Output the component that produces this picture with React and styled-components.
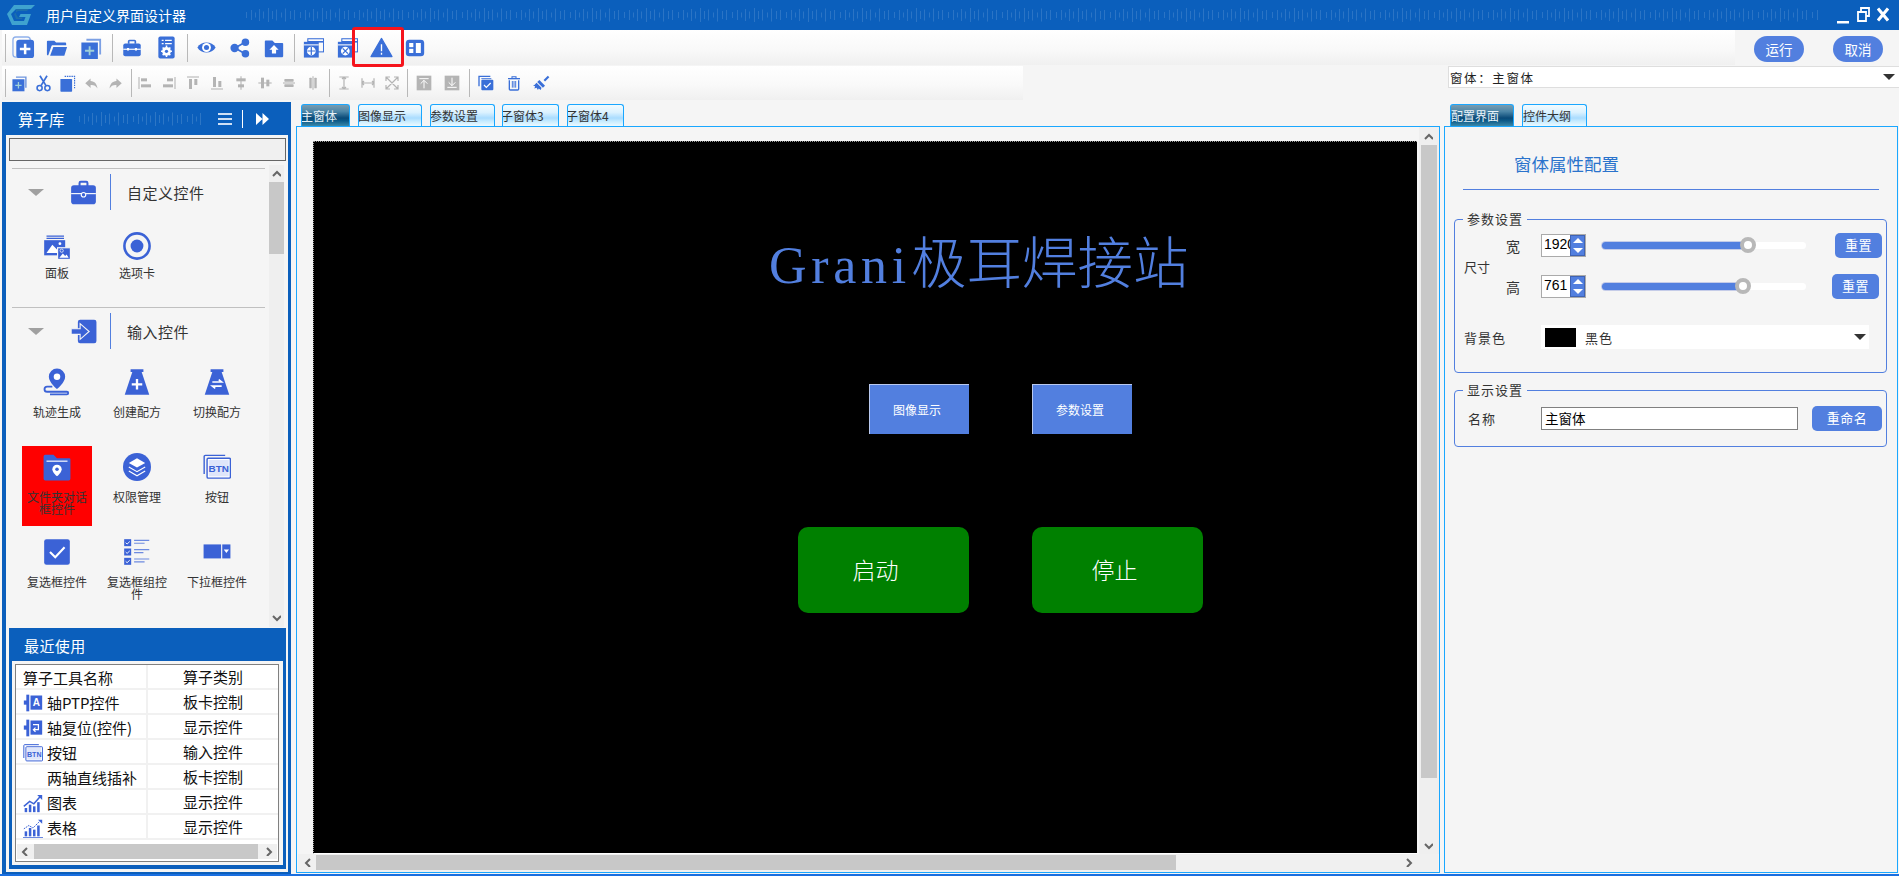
import React from 'react';
import styled, { createGlobalStyle } from 'styled-components';

const FONT = `"Noto Sans CJK SC", "Liberation Sans", sans-serif`;
const BLUE = '#0b5fbc';
const CYAN = '#1aa7ff';
const ACCENT = '#527fdf';
const T = '#3a6fd8';
const L = '#3b62d6';
const G = '#b4b4b4';

const Global = createGlobalStyle`
  html, body { margin: 0; padding: 0; background: #fff; overflow: hidden; }
  * { box-sizing: border-box; }
  body { font-family: ${FONT}; font-size: 12px; color: #333; }
`;

const Win = styled.div`
  width: 1899px; height: 876px; display: flex; flex-direction: column;
  background: #f5f5f5; border-bottom: 2px solid #1a6fe0; overflow: hidden;
`;
const TitleBar = styled.div`
  height: 30px; flex: none; background: ${BLUE}; display: flex; align-items: center; color: #fff;
`;
const LogoBox = styled.div` width: 28px; height: 20px; margin-left: 7px; flex: none; `;
const TitleText = styled.div` margin-left: 11px; width: 199px; font-size: 14px; line-height: 30px; flex: none; `;
const WaveSvg = styled.svg` display: block; flex: none; `;
const Controls = styled.div` display: flex; margin-left: 19px; `;
const CtrlSvg = styled.svg` display: block; margin-left: ${p => p.$m || 0}px; `;

const Row = styled.div` height: 35px; flex: none; display: flex; justify-content: space-between; `;
const Toolbar = styled.div`
  width: ${p => p.$w}px; height: ${p => p.$h || 35}px; margin-top: ${p => p.$top || 0}px; margin-left: 2px;
  display: flex; align-items: center; flex: none;
  background: linear-gradient(#fff, #f9f9f9 55%, #f0f0f0);
`;
const Sep = styled.div`
  width: 1px; height: 28px; background: #b8b8b8; flex: none;
  margin-left: ${p => p.$l || 0}px; margin-right: ${p => p.$r || 0}px;
`;
const Slot = styled.div`
  width: ${p => p.$w}px; height: 100%; flex: none; display: flex; align-items: center; justify-content: center; position: relative;
  &::after {
    content: ${p => (p.$flag ? '""' : 'none')};
    position: absolute; left: -12px; right: -6px; top: -3px; bottom: -2px;
    border: 3px solid #f5141c; border-radius: 3px;
  }
`;
const Svg = styled.svg` display: block; flex: none; `;
const TopButtons = styled.div` display: flex; gap: 29px; margin: 6px 16px 0 19px; flex: 1; `;
const PillButton = styled.div`
  width: 50px; height: 26px; border-radius: 13px; background: ${ACCENT}; color: #fff;
  font-size: 13.5px; line-height: 26px; text-align: center;
`;
const FormCombo = styled.div`
  width: 451px; height: 22px; margin-top: 1px; background: #fff; border: 1px solid #dedede; border-right: 0;
  display: flex; align-items: center; justify-content: space-between; padding: 0 4px 0 1px;
  font-size: 12.5px; letter-spacing: 1.6px; color: #222;
`;
const ArrowDown = styled.div`
  width: 0; height: 0; border-left: 6px solid transparent; border-right: 6px solid transparent; border-top: 6px solid #333; flex: none;
`;

const Body = styled.div` flex: 1; display: flex; min-height: 0; `;
const LeftPanel = styled.div`
  width: 289px; margin: 2px 0 0 2px; flex: none; display: flex; flex-direction: column;
  border: solid ${BLUE}; border-width: 0 3px 2px 4px; background: #f5f5f5;
`;
const PanelHead = styled.div`
  height: 33px; flex: none; background: ${BLUE}; margin: 0 -3px 0 -4px; display: flex; align-items: center; color: #fff;
`;
const PanelTitle = styled.div` font-size: 15.5px; margin-left: 16px; width: 60px; `;
const HeadRule = styled.div` width: 1px; height: 18px; background: #fff; margin: 0 13px 0 10px; `;
const PanelInner = styled.div` flex: 1; display: flex; flex-direction: column; padding: 3px 2px 3px 3px; min-height: 0; `;
const Search = styled.div` height: 23px; flex: none; border: 1px solid #666; background: #f0f0f0; `;
const ListWrap = styled.div` height: 462px; margin: 4px 0 1px; display: flex; flex: none; `;
const GroupList = styled.div` width: 256px; margin-left: 3px; padding-top: 3px; overflow: hidden; flex: none; `;
const GroupHead = styled.div`
  width: 253px; height: 49px; border-top: 1px solid #c0c0c0; display: flex; align-items: center; padding: 0 0 2px 16px;
`;
const Tri = styled.div`
  width: 0; height: 0; border-left: 8px solid transparent; border-right: 8px solid transparent; border-top: 7px solid #a0a0a0; margin-right: 26px; flex: none;
`;
const VRule = styled.div` width: 1px; height: 36px; background: ${ACCENT}; margin: 0 16px 0 13px; flex: none; `;
const GroupName = styled.div` font-size: 15px; letter-spacing: 0.5px; color: #333; `;
const ItemGrid = styled.div`
  display: grid; grid-template-columns: repeat(3, 70px); grid-auto-rows: 80px; gap: 5px 10px; margin: 5px 0 5px 10px;
`;
const Cell = styled.div`
  background: ${p => (p.$hot ? '#ff0000' : 'transparent')};
  display: flex; flex-direction: column; align-items: center;
`;
const CellIcon = styled.div` height: 45px; padding-top: ${p => (p.$drop ? 10 : 7)}px; flex: none; `;
const CellLabel = styled.div` font-size: 12px; line-height: 12px; text-align: center; color: #333; width: 60px; `;
const VBar = styled.div`
  width: ${p => p.$w || 15}px; margin-left: 1px; flex: none; background: #efefef; display: flex; flex-direction: column; align-items: center; position: relative;
`;
const VThumb = styled.div`
  position: absolute; left: ${p => p.$x || 0}px; right: ${p => p.$x || 0}px; top: ${p => p.$t}px; height: ${p => p.$h}px; background: #c8c8c8;
`;
const Chevron = styled.svg` position: absolute; display: block; ${p => p.$pos} `;

const Recent = styled.div`
  height: 241px; flex: none; margin-right: 0; border: solid ${BLUE}; border-width: 0 3px 4px; background: #f5f5f5; display: flex; flex-direction: column;
`;
const RecentHead = styled.div`
  height: 33px; flex: none; background: ${BLUE}; margin: 0 -3px; padding-left: 15px; font-size: 15px; line-height: 36px; color: #fff; letter-spacing: .4px;
`;
const TableBox = styled.div`
  height: 198px; margin: 3px 4px 0 3px; border: 1px solid #808080; background: #fff; display: flex; flex-direction: column; flex: none; padding-bottom: 2px;
`;
const Rows = styled.div` flex: 1; overflow: hidden; `;
const TRow = styled.div`
  height: 25px; display: grid; grid-template-columns: 132px 1fr; border-bottom: 2px solid #f1f1f1; font-size: 15px; line-height: 23px; color: #111;
`;
const TName = styled.div`
  border-right: 2px solid #f1f1f1; padding-left: 7px; display: flex; align-items: center; height: 25px; white-space: nowrap; overflow: hidden;
`;
const TIcon = styled.div` width: 24px; flex: none; `;
const TKind = styled.div` padding-left: 35px; `;
const HBar = styled.div` height: ${p => p.$h || 15}px; margin: 0 1px; background: #f0f0f0; flex: none; position: relative; `;
const HThumb = styled.div`
  position: absolute; left: ${p => p.$l}px; width: ${p => p.$w}px; top: ${p => p.$t || 0}px; height: 15px; background: #c8c8c8;
`;

const Center = styled.div` width: 1144px; margin-left: 5px; flex: none; display: flex; flex-direction: column; margin-bottom: 1px; `;
const TabStrip = styled.div` height: 26px; flex: none; padding-top: 4px; display: flex; align-items: stretch; `;
const Tab = styled.div`
  width: ${p => p.$w}px; margin-left: ${p => p.$m}px; flex: none; overflow: hidden; white-space: nowrap;
  border: 1px solid ${CYAN}; border-bottom: 0; border-radius: 3px 3px 0 0;
  font-size: 12px; line-height: 22px; text-indent: ${p => p.$indent || 0}px;
  color: ${p => (p.$on ? '#e8f2f8' : '#333')};
  background: ${p => (p.$on
    ? 'linear-gradient(#7a9db1, #4d87a8 30%, #0a4a78 62%, #0c5a88 75%, #3b88a8)'
    : 'linear-gradient(#f2fbff, #dcf2ff 35%, #a9dcff 62%, #c8ecff 78%, #edfaff)')};
`;
const Frame = styled.div` flex: 1; border: 1px solid ${CYAN}; display: flex; flex-direction: column; min-height: 0; background: #f5f5f5; `;
const FrameMain = styled.div` flex: 1; display: flex; min-height: 0; `;
const Viewport = styled.div` flex: 1; padding: 14px 1px 0 16px; display: flex; `;
const Canvas = styled.div`
  flex: 1; background: #000; position: relative; border-top: 1px dotted #999; border-left: 1px dotted #999; border-bottom: 1px solid #fff;
`;
const Headline = styled.div`
  position: absolute; left: 455px; top: 87px; height: 60px; line-height: 60px; font-size: 55.5px; color: ${ACCENT}; white-space: nowrap; font-weight: 300;
`;
const Latin = styled.span` font-family: "Liberation Serif", serif; font-size: 52px; letter-spacing: 4.7px; `;
const FlatButton = styled.div`
  position: absolute; left: ${p => p.$x}px; top: ${p => p.$y}px; width: 100px; height: 50px; background: ${ACCENT};
  border-top: 1px solid #b9c9ef; border-left: 1px solid #b9c9ef; color: #fff; font-size: 12px; line-height: 49px; text-align: center; padding-right: 5px;
`;
const GreenButton = styled.div`
  position: absolute; left: ${p => p.$x}px; top: ${p => p.$y}px; width: 171px; height: 86px; background: #008000; border-radius: 10px;
  color: #fff; font-size: 23px; line-height: 84px; text-align: center; padding-right: ${p => p.$pad}px; font-weight: 300;
`;

const Right = styled.div` width: 454px; margin-left: 4px; flex: none; display: flex; flex-direction: column; margin-bottom: 1px; `;
const RightHeadBlock = styled.div`
  margin: 0 18px; height: 63px; border-bottom: 1px solid ${ACCENT}; padding: 25px 0 0 51px; font-size: 17.5px; line-height: 24px; color: #2a73cc; flex: none;
`;
const Group = styled.div`
  position: relative; margin: ${p => p.$top}px 0 0 9px; width: 433px; height: ${p => p.$h}px; border: 1px solid ${ACCENT}; border-radius: 4px; padding: ${p => p.$pad}px 0 0 9px; flex: none;
`;
const Legend = styled.div`
  position: absolute; left: 8px; top: -10px; padding: 0 4px; background: #f5f5f5; font-size: 13px; line-height: 18px; letter-spacing: 1px; color: #333;
`;
const SizeBlock = styled.div` display: flex; align-items: center; height: 64px; `;
const FieldName = styled.div` width: ${p => p.$w}px; flex: none; font-size: 13px; letter-spacing: ${p => p.$ls || 0}px; color: #333; `;
const SizeRows = styled.div` display: flex; flex-direction: column; gap: 18px; margin-left: 16px; `;
const SizeRow = styled.div` display: flex; align-items: center; height: 23px; `;
const Axis = styled.div` width: 35px; flex: none; font-size: 14px; color: #333; `;
const Spin = styled.div`
  width: 45px; height: 23px; flex: none; display: flex; border: 1px solid #aaa; background: #fff; overflow: hidden;
`;
const SpinValue = styled.div`
  width: 28px; overflow: hidden; font-family: "Liberation Sans", sans-serif; font-size: 14px; line-height: 19px; padding-left: 2px; color: #000; flex: none; white-space: nowrap;
`;
const SpinButtons = styled.div`
  flex: 1; background: ${ACCENT}; display: flex; flex-direction: column; border: 1px solid #3f63b4; gap: 2px; background-clip: padding-box;
`;
const SpinHalf = styled.div` flex: 1; display: flex; align-items: center; justify-content: center; background: ${ACCENT}; `;
const MiniTri = styled.div`
  width: 0; height: 0; border-left: 5px solid transparent; border-right: 5px solid transparent;
  ${p => (p.$up ? 'border-bottom: 5px solid #fff;' : 'border-top: 5px solid #fff;')}
`;
const Track = styled.div`
  width: 204px; height: 7px; margin-left: 16px; flex: none; background: #fff; border-radius: 4px; position: relative;
`;
const TrackFill = styled.div`
  height: 100%; width: ${p => p.$pct}px; background: ${ACCENT}; border-radius: 4px 0 0 4px; box-shadow: 0 0 0 1px #c5cce8;
`;
const TrackThumb = styled.div`
  position: absolute; left: ${p => p.$pct - 8}px; top: -5px; width: 16px; height: 16px; border-radius: 50%; background: #fff; border: 4px solid #b8b8b8;
`;
const SmallButton = styled.div`
  width: ${p => p.$w || 47}px; height: 25px; margin-left: ${p => p.$m}px; flex: none; background: ${ACCENT}; border-radius: 5px; color: #fff;
  font-size: 13px; line-height: 24px; text-align: center; letter-spacing: .5px;
`;
const ColorRow = styled.div` display: flex; align-items: center; margin-top: 27px; `;
const ColorCombo = styled.div`
  width: 328px; height: 24px; background: #fff; flex: none; display: flex; align-items: center; padding: 0 3px 0 4px;
`;
const Swatch = styled.div` width: 31px; height: 19px; background: #000; flex: none; `;
const ColorName = styled.div` flex: 1; margin-left: 9px; font-size: 13px; letter-spacing: 1px; color: #333; `;
const NameRow = styled.div` display: flex; align-items: center; padding-left: 4px; `;
const NameInput = styled.div`
  width: 257px; height: 23px; margin-left: 0; flex: none; background: #fff; border: 1px solid #808080; font-size: 13.5px; line-height: 21px; padding-left: 3px; color: #000;
`;

/* ---------- drawings ---------- */
const I = ({ s = 24, w, h, children }) => (
  <Svg width={w || s} height={h || s} viewBox="0 0 24 24">{children}</Svg>
);

const icons = {
  newDoc: <><rect x="1" y="1" width="18" height="21" rx="3" fill="none" stroke="#8fb0ea" strokeWidth="1.4" /><rect x="4.5" y="4" width="18.5" height="19" rx="3" fill={T} /><path d="M13.7 8v11M8.2 13.5h11" stroke="#fff" strokeWidth="2.6" /></>,
  folder: <><path d="M1 5a1 1 0 0 1 1-1h7l2 2h10a1 1 0 0 1 1 1v2H7a1 1 0 0 0-1 .7L2.5 20H2a1 1 0 0 1-1-1z" fill={T} /><path d="M8 11h15l-3 9.5H4.5z" fill={T} /></>,
  addWin: <><path d="M7 2h16v17h-2V4H7z" fill="#7ca0e4" /><rect x="1.5" y="6" width="18" height="18" fill={T} /><path d="M10.5 10v10M5.5 15h10" stroke="#9fd0d8" strokeWidth="2" /></>,
  case: <><path d="M8 7V4a1 1 0 0 1 1-1h6a1 1 0 0 1 1 1v3" fill="none" stroke={T} strokeWidth="2" /><rect x="1.5" y="6.5" width="21" height="15.5" rx="2.5" fill={T} /><path d="M1.5 13.5h21" stroke="#fff" strokeWidth="1.4" /><rect x="6" y="12" width="2.5" height="3" fill="#fff" /><rect x="15.5" y="12" width="2.5" height="3" fill="#fff" /></>,
  docGear: <><rect x="3.5" y="0.5" width="17" height="23" rx="2" fill={T} /><path d="M7 4.5h2M10.5 4.5h7M7 8h2M10.5 8h7" stroke="#fff" strokeWidth="1.2" /><circle cx="12" cy="16" r="4.6" fill="#fff" /><circle cx="12" cy="16" r="1.7" fill={T} /><path d="M12 10v2M12 20v2M6.3 16h2M15.7 16h2M8 12l1.3 1.3M16 20l-1.3-1.3M16 12l-1.3 1.3M8 20l1.3-1.3" stroke="#fff" strokeWidth="1.6" /></>,
  eye: <><path d="M.5 12C5 3.5 19 3.5 23.500 12 19 20.500 5 20.500.5 12z" fill={T} /><circle cx="12" cy="12" r="5.600" fill="#fff" /><circle cx="12" cy="12" r="3.200" fill={T} /></>,
  share: <><path d="M6 12L18 5M6 12l12 7" stroke={T} strokeWidth="2" /><circle cx="5.5" cy="12" r="5" fill={T} /><circle cx="18.5" cy="5" r="4.5" fill={T} /><circle cx="18.5" cy="19" r="4.5" fill={T} /></>,
  folderUp: <><path d="M2 3h8l3 3h9a1 1 0 0 1 1 1v15a1 1 0 0 1-1 1H2a1 1 0 0 1-1-1V4a1 1 0 0 1 1-1z" fill={T} /><path d="M12 8.5l5.5 5.5H14.5v4.5h-5V14H6.5z" fill="#fff" /></>,
  winPlus: <><rect x="5.5" y="2" width="18" height="15" fill="none" stroke={T} strokeWidth="1.2" /><path d="M5.5 5.5h18" stroke={T} strokeWidth="1.8" /><rect x="1" y="5.5" width="17" height="18" fill={T} /><path d="M1 9h17" stroke="#fff" strokeWidth="1.2" /><circle cx="9.5" cy="16" r="5" fill="#fff" /><path d="M9.5 11.5v9M5 16h9" stroke={T} strokeWidth="1.4" /></>,
  winX: <><rect x="5.5" y="2" width="18" height="15" fill="none" stroke={T} strokeWidth="1.2" /><path d="M5.5 5.5h18" stroke={T} strokeWidth="1.8" /><rect x="1" y="5.5" width="17" height="18" fill={T} /><path d="M1 9h17" stroke="#fff" strokeWidth="1.2" /><circle cx="9.5" cy="16" r="5" fill="#fff" /><path d="M6.5 13l6 6M12.5 13l-6 6" stroke={T} strokeWidth="1.6" /></>,
  warn: <><path d="M12 2.5L23 21.5H1z" fill={T} stroke={T} strokeWidth="1.2" strokeLinejoin="round" /><path d="M12 8.5v7.5M12 17.6v2" stroke="#fff" strokeWidth="1.4" /></>,
  layout: <><rect x="1" y="2" width="22" height="20" rx="4" fill={T} /><rect x="5" y="6" width="5" height="5" fill="#fff" /><rect x="5" y="13" width="5" height="5" fill="#fff" /><rect x="13" y="6" width="6" height="12" fill="#fff" /></>,

  copy: <><path d="M7 2h15v16h-2V4H7z" fill="#6f95de" /><rect x="2" y="6" width="17" height="17" fill={T} /><path d="M10.5 10v9M6 14.5h9" stroke="#9fd0d8" strokeWidth="1.8" /></>,
  cut: <><path d="M7 1l8.5 14M17 1L8.5 15" stroke={T} strokeWidth="2.4" /><circle cx="6.5" cy="18.5" r="3.6" fill="none" stroke={T} strokeWidth="2.2" /><circle cx="17.5" cy="18.5" r="3.6" fill="none" stroke={T} strokeWidth="2.2" /></>,
  paste: <><path d="M8 2h14v17" fill="none" stroke={T} strokeWidth="1.6" strokeDasharray="2 1.2" /><rect x="2" y="5.5" width="16.5" height="18" rx="1" fill={T} /></>,
  undo: <path d="M10.5 4L2 11.5l8.5 7.5v-4.5c5.5-.3 8.5 1.5 11 5.5-.7-7.5-4.5-11.5-11-12z" fill={G} />,
  redo: <path d="M13.5 4L22 11.5l-8.5 7.5v-4.5C8 14.2 5 16 2.500 20c.7-7.500 4.500-11.500 11-12z" fill={G} />,
  aL: <><path d="M3 3v18" stroke={G} strokeWidth="1.6" /><rect x="6" y="5" width="9" height="4.500" fill={G} /><rect x="6" y="14" width="15" height="4.500" fill={G} /></>,
  aR: <><path d="M21 3v18" stroke={G} strokeWidth="1.6" /><rect x="9" y="5" width="9" height="4.500" fill={G} /><rect x="3" y="14" width="15" height="4.500" fill={G} /></>,
  aT: <><path d="M3 3h18" stroke={G} strokeWidth="1.6" /><rect x="6" y="6" width="4.500" height="15" fill={G} /><rect x="14" y="6" width="4.500" height="9" fill={G} /></>,
  aB: <><path d="M3 21h18" stroke={G} strokeWidth="1.6" /><rect x="6" y="3" width="4.500" height="15" fill={G} /><rect x="14" y="9" width="4.500" height="9" fill={G} /></>,
  aH: <><path d="M12 2v20" stroke={G} strokeWidth="1.6" /><rect x="5" y="5" width="14" height="4.500" fill={G} /><rect x="7.500" y="14" width="9" height="4.500" fill={G} /></>,
  aV: <><path d="M2 12h20" stroke={G} strokeWidth="1.6" /><rect x="6" y="4" width="4.500" height="16" fill={G} /><rect x="14" y="7" width="4.500" height="10" fill={G} /></>,
  dH: <><path d="M3 12h18" stroke={G} strokeWidth="1.6" /><rect x="5" y="6" width="14" height="4" rx="1" fill={G} /><rect x="5" y="14" width="14" height="4" rx="1" fill={G} /></>,
  dV: <><path d="M12 2v20" stroke={G} strokeWidth="1.6" /><rect x="6.500" y="4" width="3.600" height="16" rx="1" fill={G} /><rect x="14" y="4" width="3.600" height="16" rx="1" fill={G} /></>,
  sH: <path d="M5 3h14M5 21h14M12 3v18M9 6l3-3 3 3M9 18l3 3 3-3" stroke={G} strokeWidth="1.800" fill="none" />,
  sW: <path d="M3 5v14M21 5v14M3 12h18M6 9l-3 3 3 3M18 9l3 3-3 3" stroke={G} strokeWidth="1.800" fill="none" />,
  sA: <path d="M3 3l18 18M21 3L3 21M3 9V3h6M15 3h6v6M3 15v6h6M21 15v6h-6" stroke={G} strokeWidth="1.800" fill="none" />,
  toT: <><rect x="1" y="1" width="22" height="22" fill={G} /><path d="M5 5.500h14M12 8v12M7 13l5-5 5 5" stroke="#fff" strokeWidth="1.500" fill="none" /></>,
  toB: <><rect x="1" y="1" width="22" height="22" fill={G} /><path d="M5 18.500h14M12 4v12M7 11l5 5 5-5" stroke="#fff" strokeWidth="1.500" fill="none" /></>,
  chkDoc: <><path d="M1.500 17V2h17" fill="none" stroke={T} strokeWidth="2" /><path d="M5 5.500h15" stroke={T} strokeWidth="1.400" /><rect x="5" y="7" width="18" height="16" rx="1.500" fill={T} /><path d="M9 15l3.500 3.500L19 12" stroke="#fff" strokeWidth="1.800" fill="none" /></>,
  trash: <><path d="M3 5.500h18" stroke={T} strokeWidth="2" /><path d="M9 5V2.500h6V5" stroke={T} strokeWidth="1.600" fill="none" /><path d="M5 8v13a1.500 1.500 0 0 0 1.500 1.500h11A1.500 1.500 0 0 0 19 21V8" stroke={T} strokeWidth="2" fill="none" /><path d="M9.500 9v10M12 9v10M14.500 9v10" stroke={T} strokeWidth="1.400" /></>,
  broom: <><path d="M22 2l-6 6" stroke={T} strokeWidth="3" /><path d="M9 7l8 8-3 3-8-8z" fill={T} /><path d="M2 14l3-3 7 7-1 3-3-2-1 2-2-3-3 1 1-3-3-1z" fill={T} /></>,
};

const LI = {
  case: <><path d="M8.500 7V3.500a1 1 0 0 1 1-1h5a1 1 0 0 1 1 1V7" fill="none" stroke={L} strokeWidth="1.800" /><rect x="1" y="5.500" width="22" height="17" rx="2.500" fill={L} /><path d="M1 13h22" stroke="#fff" strokeWidth="1" /><circle cx="12" cy="14" r="2" fill={L} stroke="#fff" strokeWidth="1" /></>,
  panel: <><path d="M3 3.500h15M3 5.500h15" stroke={L} strokeWidth="1" /><rect x="1" y="7" width="18" height="13" fill={L} /><path d="M3 18l5-7 4 4 2-2 3 5z" fill="#fff" /><circle cx="14.500" cy="10" r="1.200" fill="#fff" /><rect x="12.500" y="13.500" width="11" height="10" fill={L} stroke="#f5f5f5" strokeWidth="1" /><path d="M14 22l3-3.500 2 2 1.200-1.300L22 22z" fill="#fff" /><circle cx="16" cy="16" r="1.400" fill="none" stroke="#fff" strokeWidth=".6" /></>,
  radio: <><circle cx="12" cy="12" r="10.800" fill="none" stroke={L} strokeWidth="2.200" /><circle cx="12" cy="12" r="5.500" fill={L} /></>,
  enter: <><rect x="7" y="1.500" width="16.500" height="21" rx="2" fill={L} /><path d="M1 9.500h8V5l8 7-8 7v-4.500H1z" fill={L} stroke="#f5f5f5" strokeWidth="1" /></>,
  pin: <><path d="M12 .5a7 7 0 0 0-7 7c0 5 7 10.500 7 10.500s7-5.500 7-10.500a7 7 0 0 0-7-7z" fill={L} /><circle cx="12" cy="7.500" r="2.800" fill="#fff" /><path d="M8 16.500H3.500a2.200 2.200 0 0 0 0 4.400h17a1.100 1.100 0 0 1 0 2.200H6" fill="none" stroke={L} strokeWidth="1.600" transform="translate(0 -.5)" /></>,
  flaskAdd: <><path d="M6.500 1h11v2.500h-1.500l6.500 19.500h-21L8 3.500H6.500z" fill={L} /><path d="M12 9.500v9M7.500 14h9" stroke="#fff" strokeWidth="2" /></>,
  flaskSwap: <><path d="M6.500 1h11v2.500h-1.500l6.500 19.500h-21L8 3.500H6.500z" fill={L} /><path d="M8 12h8l-2.500-2M16 15.500H8l2.500 2" stroke="#fff" strokeWidth="1.400" fill="none" /></>,
  folderPin: <><path d="M2 1.500h7l3 3h10.500a1 1 0 0 1 1 1V22a1.500 1.500 0 0 1-1.500 1.500H2A1.500 1.500 0 0 1 .5 22V3A1.500 1.500 0 0 1 2 1.500z" fill={L} /><path d="M3 7h18" stroke="#fff" strokeWidth="1" /><path d="M12 10a4 4 0 0 0-4 4c0 3 4 6 4 6s4-3 4-6a4 4 0 0 0-4-4z" fill="#fff" /><circle cx="12" cy="14" r="1.500" fill={L} /></>,
  layers: <><circle cx="12" cy="12" r="12" fill={L} /><path d="M12 4.500l7 4-7 4-7-4z" fill="#fff" /><path d="M5 12l7 4 7-4M5 15.500l7 4 7-4" stroke="#fff" strokeWidth="1" fill="none" /></>,
  check: <><rect x="1" y="1" width="22" height="22" rx="2" fill={L} /><path d="M6 12l4.500 4.500L18.500 8" stroke="#fff" strokeWidth="1.800" fill="none" /></>,
  list: <><rect x="1" y="1" width="6" height="6" fill={L} /><rect x="1" y="9" width="6" height="6" fill={L} /><rect x="1" y="17" width="6" height="6" fill={L} /><path d="M9.500 2h13M9.500 4.500h9M9.500 10h13M9.500 12.500h8M9.500 18h13M9.500 20.500h9" stroke="#6d8ae0" strokeWidth="1" /><path d="M2.300 4l1.200 1.200L5.800 3M2.300 12l1.200 1.200L5.800 11M2.300 20l1.200 1.200L5.800 19" stroke="#fff" strokeWidth=".8" fill="none" /></>,
  combo: <><rect x="0.500" y="5.500" width="15" height="12" fill={L} /><rect x="16.500" y="5.500" width="7" height="12" fill={L} /><path d="M17.800 9.800h4.500l-2.250 3z" fill="#fff" /></>,
};

const BtnMark = ({ size = 28 }) => (
  <Svg width={size} height={size} viewBox="0 0 24 24">
    <path d="M1 18V3a1 1 0 0 1 1-1h17" fill="none" stroke={L} strokeWidth="1.200" />
    <rect x="3.500" y="4.500" width="20" height="17" rx="1" fill="#fff" stroke={L} strokeWidth="1.200" />
    <rect x="5" y="6" width="17" height="14" fill="#dfe6fa" />
    <text x="13.500" y="16.500" textAnchor="middle" fontFamily="Liberation Sans" fontWeight="700" fontSize="8.500" fill={L}>BTN</text>
  </Svg>
);

const TIcons = {
  axisA: <><rect x="1" y="9" width="5" height="5" fill={L} /><rect x="4" y="2" width="3.500" height="20" fill={L} /><rect x="9" y="3" width="14" height="17" fill={L} /><text x="16" y="16" textAnchor="middle" fontSize="12" fontWeight="700" fontFamily="Liberation Sans" fill="#fff">A</text></>,
  axisR: <><rect x="1" y="9" width="5" height="5" fill={L} /><rect x="4" y="2" width="3.500" height="20" fill={L} /><rect x="9" y="3" width="14" height="17" fill={L} /><path d="M12 8h6.500v6H13M15 11.500L12.500 14l2.500 2.500" stroke="#fff" strokeWidth="1.500" fill="none" /></>,
  chart: <><path d="M1 16l7-6 5 3 8-9" stroke={L} strokeWidth="1.800" fill="none" /><path d="M17 2.500h6v6z" fill={L} /><rect x="2" y="18" width="3" height="5" fill={L} /><rect x="7" y="14" width="3" height="9" fill={L} /><rect x="12" y="16" width="3" height="7" fill={L} /><rect x="17" y="11" width="3" height="12" fill={L} /></>,
  chart2: <><path d="M1 13l6-4 5 3 8-8" stroke={L} strokeWidth="1.200" strokeDasharray="2 1" fill="none" /><path d="M18 2h5v5z" fill={L} /><rect x="2" y="16" width="3" height="6" fill={L} /><rect x="7" y="12" width="3" height="10" fill={L} /><rect x="12" y="14" width="3" height="8" fill={L} /><rect x="17" y="9" width="3" height="13" fill={L} /><path d="M0 23.500h24" stroke={L} /></>,
};

const Tool = ({ k, size, w, flag }) => (
  <Slot $w={w} $flag={flag}><I s={size}>{icons[k]}</I></Slot>
);

const Wave = ({ id, width, height, color }) => (
  <WaveSvg width={width} height={height}>
    <defs>
      <pattern id={id} width="54" height={height} patternUnits="userSpaceOnUse">
        {[[1, 6], [6, 10], [10, 5], [14, 12], [18, 7], [23, 14], [27, 8], [31, 11], [36, 5], [40, 13], [45, 8], [49, 10]].map(([x, h]) => (
          <rect key={x} x={x} y={(height - h) / 2} width="1" height={h} fill={color} />
        ))}
      </pattern>
    </defs>
    <rect width={width} height={height} fill={`url(#${id})`} />
  </WaveSvg>
);

const Chev = ({ dir, pos }) => {
  const d = { up: 'M1 6l4-4 4 4', down: 'M1 2l4 4 4-4', left: 'M6 1L2 5l4 4', right: 'M2 1l4 4-4 4' }[dir];
  return <Chevron $pos={pos} width="9" height="9" viewBox="0 0 9 9"><path d={d} fill="none" stroke="#666" strokeWidth="2" /></Chevron>;
};

const GROUPS = [
  { name: '自定义控件', icon: 'case', drop: true, items: [
    { label: '面板', icon: 'panel' }, { label: '选项卡', icon: 'radio' },
  ] },
  { name: '输入控件', icon: 'enter', items: [
    { label: '轨迹生成', icon: 'pin' }, { label: '创建配方', icon: 'flaskAdd' }, { label: '切换配方', icon: 'flaskSwap' },
    { label: '文件夹对话框控件', icon: 'folderPin', hot: true }, { label: '权限管理', icon: 'layers' }, { label: '按钮', btn: true },
    { label: '复选框控件', icon: 'check' }, { label: '复选框组控件', icon: 'list' }, { label: '下拉框控件', icon: 'combo' },
  ] },
];

const RECENT = [
  { name: '轴PTP控件', kind: '板卡控制', icon: 'axisA' },
  { name: '轴复位(控件)', kind: '显示控件', icon: 'axisR' },
  { name: '按钮', kind: '输入控件', btn: true },
  { name: '两轴直线插补', kind: '板卡控制' },
  { name: '图表', kind: '显示控件', icon: 'chart' },
  { name: '表格', kind: '显示控件', icon: 'chart2' },
];

const SizeLine = ({ axis, value, pct, shift }) => (
  <SizeRow>
    <Axis>{axis}</Axis>
    <Spin>
      <SpinValue>{value}</SpinValue>
      <SpinButtons>
        <SpinHalf><MiniTri $up /></SpinHalf>
        <SpinHalf><MiniTri /></SpinHalf>
      </SpinButtons>
    </Spin>
    <Track>
      <TrackFill $pct={pct} />
      <TrackThumb $pct={pct} />
    </Track>
    <SmallButton $m={shift}>重置</SmallButton>
  </SizeRow>
);

export default function App() {
  return (
    <>
      <Global />
      <Win>
        <TitleBar>
          <LogoBox>
            <svg width="28" height="20" viewBox="0 0 28 20">
              <path d="M7 0h21l-4 4H9L4 9l3 7h10l1.500-4H12l1.500-3H24l-4 11H5L0 9z" fill="#3fa3cf" />
              <path d="M9 4h13l-2 2H11L7 9l2 5h6l.7-1.500H11L9 9z" fill="#1b6fae" />
            </svg>
          </LogoBox>
          <TitleText>用户自定义界面设计器</TitleText>
          <Wave id="w1" width={1573} height={22} color="rgba(255,255,255,.13)" />
          <Controls>
            <CtrlSvg width="12" height="22" viewBox="0 0 12 22"><rect y="17" width="12" height="2.500" fill="#fff" /></CtrlSvg>
            <CtrlSvg $m={8} width="13" height="22" viewBox="0 0 13 22"><path d="M4 8V4h8v8H9M1 8h8v9H1z" fill="none" stroke="#fff" strokeWidth="1.800" /></CtrlSvg>
            <CtrlSvg $m={7} width="12" height="22" viewBox="0 0 12 22"><path d="M1 4.500l10 12M11 4.500l-10 12" stroke="#fff" strokeWidth="3" /></CtrlSvg>
          </Controls>
        </TitleBar>

        <Row>
          <Toolbar $w={1733}>
            <Sep $l={3} />
            <Tool k="newDoc" w={34} size={23} /><Tool k="folder" w={34} size={22} /><Tool k="addWin" w={34} size={22} />
            <Sep $l={4} $r={2} />
            <Tool k="case" w={34} size={20} /><Tool k="docGear" w={34} size={23} />
            <Sep $l={4} $r={1} />
            <Tool k="eye" w={34} size={19} /><Tool k="share" w={34} size={20} /><Tool k="folderUp" w={34} size={20} />
            <Sep $l={3} $r={1} />
            <Tool k="winPlus" w={34} size={21} /><Tool k="winX" w={34} size={21} /><Tool k="warn" w={34} size={23} flag /><Tool k="layout" w={34} size={20} />
          </Toolbar>
          <TopButtons>
            <PillButton>运行</PillButton>
            <PillButton>取消</PillButton>
          </TopButtons>
        </Row>

        <Row>
          <Toolbar $w={1021} $h={34} $top={1}>
            <Sep $l={3} $r={1} />
            <Tool k="copy" w={24} size={17} /><Tool k="cut" w={24} size={17} /><Tool k="paste" w={24} size={17} /><Tool k="undo" w={24} size={15} /><Tool k="redo" w={24} size={15} />
            <Sep $l={4} $r={1} />
            {['aL', 'aR', 'aT', 'aB', 'aH', 'aV', 'dH', 'dV'].map(k => <Tool key={k} k={k} w={24} size={16} />)}
            <Sep $l={4} $r={2} />
            <Tool k="sH" w={24} size={16} /><Tool k="sW" w={24} size={16} /><Tool k="sA" w={24} size={16} />
            <Sep $l={3} $r={4} />
            <Tool k="toT" w={24} size={16} /><Tool k="toB" w={32} size={16} />
            <Sep $l={1} $r={4} />
            <Tool k="chkDoc" w={24} size={16} /><Tool k="trash" w={31} size={16} /><Tool k="broom" w={24} size={17} />
          </Toolbar>
          <FormCombo>窗体：主窗体<ArrowDown /></FormCombo>
        </Row>

        <Body>
          <LeftPanel>
            <PanelHead>
              <PanelTitle>算子库</PanelTitle>
              <Wave id="w2" width={125} height={16} color="rgba(255,255,255,.14)" />
              <Svg width="14" height="14" viewBox="0 0 14 14" style={{ marginLeft: 15 }}><path d="M0 2h14M0 7h14M0 12h14" stroke="#cfe0f5" strokeWidth="2" /></Svg>
              <HeadRule />
              <Svg width="13" height="12" viewBox="0 0 13 12"><path d="M0 0l6.500 6L0 12zM6.500 0L13 6l-6.500 6z" fill="#fff" /></Svg>
            </PanelHead>
            <PanelInner>
              <Search />
              <ListWrap>
                <GroupList>
                  {GROUPS.map(g => (
                    <div key={g.name}>
                      <GroupHead>
                        <Tri />
                        <I s={27}>{LI[g.icon]}</I>
                        <VRule />
                        <GroupName>{g.name}</GroupName>
                      </GroupHead>
                      <ItemGrid>
                        {g.items.map(it => (
                          <Cell key={it.label} $hot={it.hot}>
                            <CellIcon $drop={g.drop}>{it.btn ? <BtnMark /> : <I s={28}>{LI[it.icon]}</I>}</CellIcon>
                            <CellLabel>{it.label}</CellLabel>
                          </Cell>
                        ))}
                      </ItemGrid>
                    </div>
                  ))}
                </GroupList>
                <VBar>
                  <Chev dir="up" pos="top: 5px; left: 3px;" />
                  <VThumb $t={17} $h={72} />
                  <Chev dir="down" pos="bottom: 4px; left: 3px;" />
                </VBar>
              </ListWrap>
              <Recent>
                <RecentHead>最近使用</RecentHead>
                <TableBox>
                  <Rows>
                    <TRow>
                      <TName>算子工具名称</TName>
                      <TKind>算子类别</TKind>
                    </TRow>
                    {RECENT.map(r => (
                      <TRow key={r.name}>
                        <TName>
                          <TIcon>
                            {r.btn ? <BtnMark size={20} /> : r.icon ? <I s={20}>{TIcons[r.icon]}</I> : null}
                          </TIcon>
                          {r.name}
                        </TName>
                        <TKind>{r.kind}</TKind>
                      </TRow>
                    ))}
                  </Rows>
                  <HBar>
                    <Chev dir="left" pos="left: 4px; top: 3px;" />
                    <HThumb $l={17} $w={224} />
                    <Chev dir="right" pos="right: 3px; top: 3px;" />
                  </HBar>
                </TableBox>
              </Recent>
            </PanelInner>
          </LeftPanel>

          <Center>
            <TabStrip>
              <Tab $w={49} $m={5} $on $indent={-1}>主窗体</Tab>
              <Tab $w={64} $m={8} $indent={-1}>图像显示</Tab>
              <Tab $w={65} $m={8} $indent={-1}>参数设置</Tab>
              <Tab $w={57} $m={7} $indent={-2}>子窗体3</Tab>
              <Tab $w={57} $m={8} $indent={-2}>子窗体4</Tab>
            </TabStrip>
            <Frame>
              <FrameMain>
                <Viewport>
                  <Canvas>
                    <Headline><Latin>Grani</Latin>极耳焊接站</Headline>
                    <FlatButton $x={555} $y={242}>图像显示</FlatButton>
                    <FlatButton $x={718} $y={242}>参数设置</FlatButton>
                    <GreenButton $x={484} $y={385} $pad={16}>启动</GreenButton>
                    <GreenButton $x={718} $y={385} $pad={6}>停止</GreenButton>
                  </Canvas>
                </Viewport>
                <VBar $w={20}>
                  <Chev dir="up" pos="top: 6px; left: 5px;" />
                  <VThumb $t={18} $h={633} $x={2} />
                  <Chev dir="down" pos="bottom: 3px; left: 5px;" />
                </VBar>
              </FrameMain>
              <HBar $h={18}>
                <Chev dir="left" pos="left: 6px; top: 4px;" />
                <HThumb $l={18} $w={860} $t={1} />
                <Chev dir="right" pos="right: 24px; top: 4px;" />
              </HBar>
            </Frame>
          </Center>

          <Right>
            <TabStrip>
              <Tab $w={64} $m={6} $on>配置界面</Tab>
              <Tab $w={65} $m={8}>控件大纲</Tab>
            </TabStrip>
            <Frame>
              <RightHeadBlock>窗体属性配置</RightHeadBlock>
              <Group $top={29} $h={154} $pad={14}>
                <Legend>参数设置</Legend>
                <SizeBlock>
                  <FieldName $w={26}>尺寸</FieldName>
                  <SizeRows>
                    <SizeLine axis="宽" value="1920" pct={146} shift={29} />
                    <SizeLine axis="高" value="761" pct={141} shift={26} />
                  </SizeRows>
                </SizeBlock>
                <ColorRow>
                  <FieldName $w={77} $ls={1}>背景色</FieldName>
                  <ColorCombo>
                    <Swatch />
                    <ColorName>黑色</ColorName>
                    <ArrowDown />
                  </ColorCombo>
                </ColorRow>
              </Group>
              <Group $top={17} $h={57} $pad={15}>
                <Legend>显示设置</Legend>
                <NameRow>
                  <FieldName $w={73} $ls={1}>名称</FieldName>
                  <NameInput>主窗体</NameInput>
                  <SmallButton $m={14} $w={70}>重命名</SmallButton>
                </NameRow>
              </Group>
            </Frame>
          </Right>
        </Body>
      </Win>
    </>
  );
}
